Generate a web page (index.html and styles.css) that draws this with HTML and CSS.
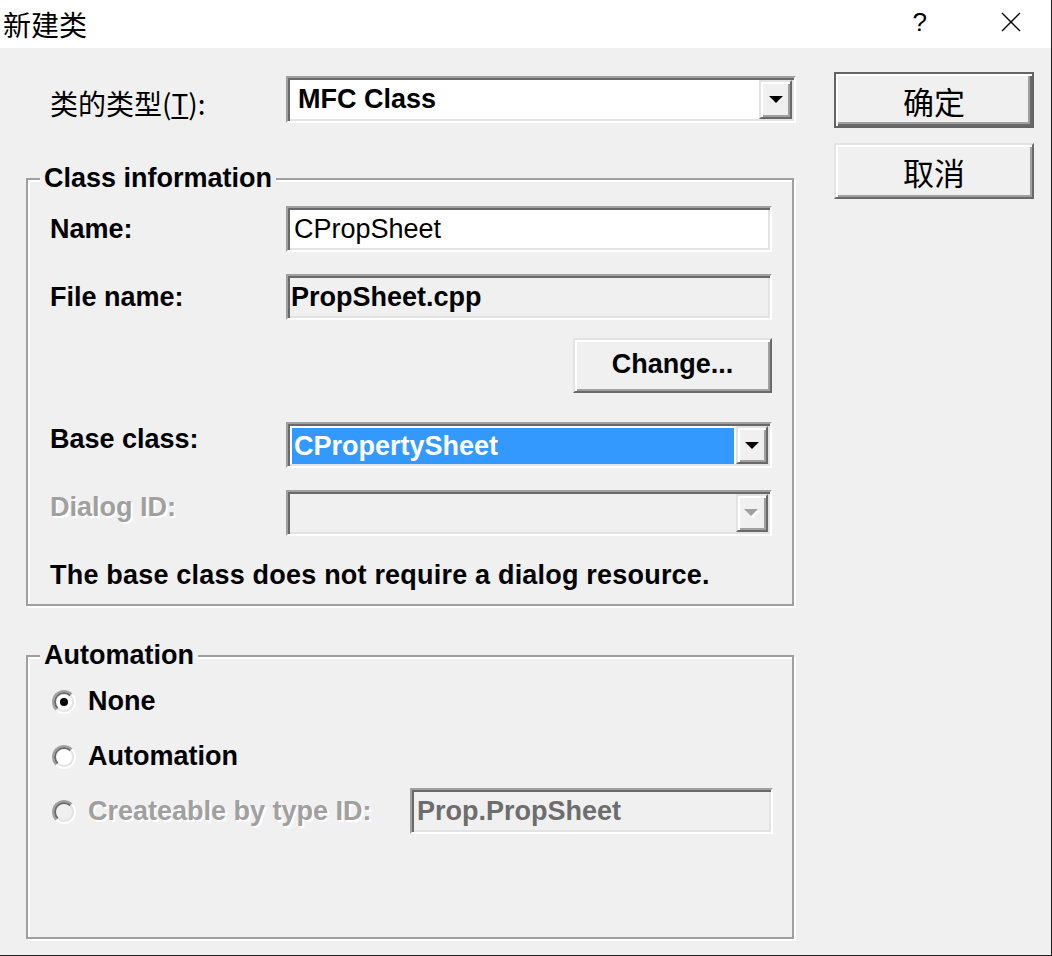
FILE: index.html
```html
<!DOCTYPE html>
<html lang="zh-CN">
<head>
    <meta charset="UTF-8">
    <meta name="viewport" content="width=device-width, initial-scale=1.0">
    <title>新建类</title>
    <link rel="stylesheet" href="styles.css">
</head>
<body>
    <div class="window">
        <div class="titlebar">
            <span class="title">新建类</span>
            <span class="help">?</span>
            <svg class="close" width="20" height="20" viewBox="0 0 20 20">
                <path d="M1 1L19 19M19 1L1 19" stroke="#000" stroke-width="1.4" fill="none"></path>
            </svg>
        </div>

        <div class="client">
            <div class="main">
                <div class="type-row">
                    <span class="cjk-label">类的类型(<u>T</u>):</span>
                    <div class="combo combo-type">
                        <span class="combo-text">MFC Class</span>
                        <span class="drop-btn">
                            <svg width="14" height="7" viewBox="0 0 14 7"><polygon points="0,0 14,0 7,7" fill="#000"></polygon></svg>
                        </span>
                    </div>
                </div>

                <div class="group group-class">
                    <span class="group-caption">Class information</span>

                    <div class="field">
                        <span class="label">Name:</span>
                        <div class="edit edit-regular">CPropSheet</div>
                    </div>

                    <div class="field field-file">
                        <span class="label">File name:</span>
                        <div class="edit edit-readonly">PropSheet.cpp</div>
                    </div>

                    <div class="change-row">
                        <button class="btn btn-change">Change...</button>
                    </div>

                    <div class="field field-base">
                        <span class="label label-lift">Base class:</span>
                        <div class="combo combo-field">
                            <span class="combo-text"><span class="selected">CPropertySheet</span></span>
                            <span class="drop-btn">
                                <svg width="14" height="7" viewBox="0 0 14 7"><polygon points="0,0 14,0 7,7" fill="#000"></polygon></svg>
                            </span>
                        </div>
                    </div>

                    <div class="field field-dialog">
                        <span class="label label-lift disabled">Dialog ID:</span>
                        <div class="combo combo-field combo-disabled">
                            <span class="combo-text"></span>
                            <span class="drop-btn">
                                <svg width="16" height="9" viewBox="0 0 16 9">
                                    <polygon points="2,2 16,2 9,9" fill="#fff"></polygon>
                                    <polygon points="0,0 14,0 7,7" fill="#a0a0a0"></polygon>
                                </svg>
                            </span>
                        </div>
                    </div>

                    <p class="note">The base class does not require a dialog resource.</p>
                </div>

                <div class="group group-automation">
                    <span class="group-caption">Automation</span>

                    <div class="radio-row">
                        <span class="radio"><span class="radio-inner"><span class="dot"></span></span></span>
                        <span class="radio-text">None</span>
                    </div>

                    <div class="radio-row">
                        <span class="radio"><span class="radio-inner"></span></span>
                        <span class="radio-text">Automation</span>
                    </div>

                    <div class="radio-row">
                        <span class="radio"><span class="radio-inner radio-disabled"></span></span>
                        <span class="radio-text radio-text-wide disabled">Createable by type ID:</span>
                        <div class="edit edit-disabled">Prop.PropSheet</div>
                    </div>
                </div>
            </div>

            <div class="side">
                <button class="btn btn-default">确定</button>
                <button class="btn btn-cancel">取消</button>
            </div>
        </div>
    </div>
</body>
</html>
```

FILE: styles.css
```css
body {
    margin: 0;
    background: #f0f0f0;
    font-family: "Liberation Sans", Arial, sans-serif;
    color: #000;
}

.window {
    width: 1052px;
    height: 956px;
    box-sizing: border-box;
    border-right: 1px solid #1e1e1e;
    border-bottom: 1px solid #1e1e1e;
    background: #f0f0f0;
    overflow: hidden;
}

/* title bar */
.titlebar {
    height: 48px;
    background: #fff;
    display: flex;
    align-items: center;
}

.title {
    font-family: "Noto Sans CJK SC", sans-serif;
    font-size: 28px;
    line-height: 48px;
    margin-left: 3px;
    flex: 1;
}

.help {
    font-size: 26px;
    line-height: 48px;
    margin-right: 74px;
    margin-top: -4px;
}

.close {
    margin-right: 30px;
    margin-top: -4px;
}

/* client area */
.client {
    display: flex;
    padding: 24px 0 0 26px;
}

.main {
    width: 770px;
    padding-top: 4px;
}

.side {
    margin-left: 38px;
    display: flex;
    flex-direction: column;
    gap: 15px;
}

.type-row {
    display: flex;
    align-items: center;
}

.cjk-label {
    width: 236px;
    padding-left: 24px;
    font-family: "Noto Sans CJK SC", sans-serif;
    font-size: 28px;
    margin-top: 6px;
}

.cjk-label u {
    text-decoration-thickness: 2px;
    text-underline-offset: 2px;
}

/* 3d frames */
.edit,
.combo {
    box-sizing: border-box;
    border: 2px solid;
    border-color: #a0a0a0 #fff #fff #a0a0a0;
    box-shadow: inset 2px 2px 0 #696969, inset -2px -2px 0 #e3e3e3;
    background: #fff;
}

.edit {
    width: 486px;
    height: 46px;
    padding: 0 6px;
    display: flex;
    align-items: center;
    font-size: 27px;
    font-weight: bold;
}

.edit-regular {
    font-weight: normal;
    padding-left: 6px;
}

.edit-readonly {
    background: #f0f0f0;
    padding-left: 3px;
}

.edit-disabled {
    width: 363px;
    background: #f0f0f0;
    color: #6d6d6d;
    padding-left: 5px;
}

.combo {
    display: flex;
    padding: 2px;
}

.combo-type {
    width: 510px;
    height: 47px;
}

.combo-field {
    width: 486px;
    height: 46px;
}

.combo-disabled {
    background: #f0f0f0;
}

.combo-text {
    flex: 1;
    display: flex;
    align-items: center;
    padding-left: 8px;
    font-size: 27px;
    font-weight: bold;
}

.combo-field .combo-text {
    padding: 2px 2px 0 2px;
    align-items: stretch;
}

.selected {
    flex: 1;
    background: #3399ff;
    color: #fff;
    display: flex;
    align-items: center;
    padding-left: 2px;
}

.drop-btn {
    width: 33px;
    box-sizing: border-box;
    border: 2px solid;
    border-color: #e3e3e3 #696969 #696969 #e3e3e3;
    box-shadow: inset 2px 2px 0 #fff, inset -2px -2px 0 #a0a0a0;
    background: #f0f0f0;
    display: flex;
    align-items: center;
    justify-content: center;
}

.combo-field .drop-btn {
    width: 32px;
}

/* buttons */
.btn {
    box-sizing: border-box;
    width: 200px;
    height: 56px;
    border: 2px solid;
    border-color: #e3e3e3 #696969 #696969 #e3e3e3;
    box-shadow: inset 2px 2px 0 #fff, inset -2px -2px 0 #a0a0a0;
    background: #f0f0f0;
    font-family: "Noto Sans CJK SC", sans-serif;
    font-size: 31px;
    color: #000;
    padding: 0;
    cursor: pointer;
}

.btn-default {
    border-color: #646464;
    box-shadow: inset 2px 2px 0 #fff, inset -2px -2px 0 #696969, inset -4px -4px 0 #a0a0a0;
}

.btn-change {
    width: 199px;
    height: 55px;
    font-family: "Liberation Sans", Arial, sans-serif;
    font-size: 27px;
    font-weight: bold;
    padding-bottom: 2px;
}

/* group boxes */
.group {
    position: relative;
    box-sizing: border-box;
    width: 768px;
    border: 2px solid #a0a0a0;
    box-shadow: inset 2px 2px 0 #fff, 2px 2px 0 #fff;
}

.group-caption {
    position: absolute;
    top: -17px;
    left: 12px;
    padding: 0 4px;
    background: #f0f0f0;
    font-size: 27px;
    font-weight: bold;
    line-height: 30px;
}

.group-class {
    margin-top: 55px;
    height: 428px;
    padding: 26px 0 0 22px;
}

.group-automation {
    margin-top: 49px;
    height: 284px;
    padding: 21px 0 0 24px;
}

.field {
    display: flex;
    align-items: center;
}

.field-file {
    margin-top: 22px;
}

.field-base {
    margin-top: 29px;
}

.field-dialog {
    margin-top: 22px;
}

.label {
    width: 236px;
    font-size: 27px;
    font-weight: bold;
}

.label-lift {
    margin-bottom: 12px;
}

.disabled {
    color: #a0a0a0;
    text-shadow: 2px 2px 0 #fff;
}

.change-row {
    width: 722px;
    margin-top: 18px;
    display: flex;
    justify-content: flex-end;
}

.note {
    margin: 24px 0 0;
    font-size: 27px;
    font-weight: bold;
    line-height: 30px;
    letter-spacing: 0.2px;
}

/* radios */
.radio-row {
    display: flex;
    align-items: center;
    height: 46px;
    margin-bottom: 9px;
}

.radio {
    box-sizing: border-box;
    width: 24px;
    height: 24px;
    border-radius: 50%;
    border: 2px solid;
    border-color: #a0a0a0 #fff #fff #a0a0a0;
    display: flex;
    margin-top: 2px;
}

.radio-inner {
    box-sizing: border-box;
    width: 20px;
    height: 20px;
    border-radius: 50%;
    border: 2px solid;
    border-color: #696969 #e3e3e3 #e3e3e3 #696969;
    background: #fff;
    display: flex;
    align-items: center;
    justify-content: center;
}

.radio-disabled {
    background: #f0f0f0;
}

.dot {
    width: 8px;
    height: 8px;
    border-radius: 50%;
    background: #000;
}

.radio-text {
    margin-left: 12px;
    font-size: 27px;
    font-weight: bold;
}

.radio-text-wide {
    width: 322px;
}
```
